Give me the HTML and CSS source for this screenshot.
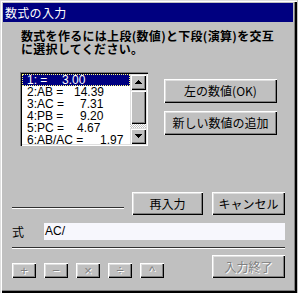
FILE: index.html
```html
<!DOCTYPE html>
<html lang="ja">
<head>
<meta charset="utf-8">
<title>数式の入力</title>
<link rel="stylesheet" href="styles.css">
</head>
<body>
<div class="window">
  <div class="titlebar">数式の入力</div>
  <div class="content">
    <p class="prompt">数式を作るには上段(数値)と下段(演算)を交互<br>に選択してください。</p>
    <div class="main">
      <div class="listbox">
        <ul class="items">
          <li class="item selected"><span class="label w35">1: =</span><span class="val">3.00</span></li>
          <li class="item"><span class="label w47">2:AB =</span><span class="val">14.39</span></li>
          <li class="item"><span class="label w53">3:AC =</span><span class="val">7.31</span></li>
          <li class="item"><span class="label w53">4:PB =</span><span class="val">9.20</span></li>
          <li class="item"><span class="label w50">5:PC =</span><span class="val">4.67</span></li>
          <li class="item"><span class="label w73">6:AB/AC =</span><span class="val">1.97</span></li>
        </ul>
        <div class="scrollbar">
          <div class="sb-btn"><svg width="7" height="4" viewBox="0 0 7 4"><path d="M3 0h1v1h1v1h1v1h1v1H0V3h1V2h1V1h1z" fill="#000"/></svg></div>
          <div class="sb-thumb"></div>
          <div class="sb-track"></div>
          <div class="sb-btn"><svg width="7" height="4" viewBox="0 0 7 4"><path d="M0 0h7v1H6v1H5v1H4v1H3V3H2V2H1V1H0z" fill="#000"/></svg></div>
        </div>
      </div>
      <div class="side-buttons">
        <button class="btn wide">左の数値(OK)</button>
        <button class="btn wide">新しい数値の追加</button>
      </div>
    </div>
    <div class="action-row">
      <div class="rule short"></div>
      <button class="btn mid first">再入力</button>
      <button class="btn mid second">キャンセル</button>
    </div>
    <div class="formula-row">
      <span class="formula-label">式</span>
      <div class="edit">AC/</div>
    </div>
    <div class="rule"></div>
    <div class="bottom-row">
      <div class="ops">
        <button class="btn op disabled">+</button>
        <button class="btn op disabled">−</button>
        <button class="btn op disabled">×</button>
        <button class="btn op disabled">÷</button>
        <button class="btn op disabled">^</button>
      </div>
      <button class="btn mid end disabled">入力終了</button>
    </div>
  </div>
</div>
</body>
</html>
```
FILE: styles.css
```css
* {
  box-sizing: border-box;
  margin: 0;
  padding: 0;
}
body {
  margin: 0;
  width: 298px;
  height: 293px;
  overflow: hidden;
  background: #c0c0c0;
  font-family: "Noto Sans CJK JP", "Liberation Sans", sans-serif;
  font-size: 12px;
  color: #000;
}
.window {
  width: 297px;
  height: 293px;
  background: #c0c0c0;
  padding: 3px 4px 4px 3px;
  box-shadow: inset 1px 1px #dfdfdf, inset 2px 2px #fff, inset -1px -1px #000, inset -2px -2px #000, inset -3px -3px #808080;
  display: flex;
  flex-direction: column;
}
.titlebar {
  height: 19px;
  background: #000080;
  color: #fff;
  padding-left: 2px;
  line-height: 19px;
  font-size: 12px;
  letter-spacing: 0.3px;
  white-space: nowrap;
}
.content {
  display: flex;
  flex-direction: column;
  padding: 0 8px 0 9px;
}
.prompt {
  margin: 7px 0 0 9px;
  font-weight: bold;
  line-height: 13px;
  letter-spacing: 0.3px;
  white-space: nowrap;
}
.main {
  display: flex;
  margin-top: 17px;
}
.listbox {
  margin-left: 8px;
  width: 128px;
  height: 74px;
  background: #fff;
  display: flex;
  padding: 2px;
  box-shadow: inset 1px 1px #808080, inset 2px 2px #000, inset -1px -1px #fff, inset -2px -2px #dfdfdf;
}
.items {
  list-style: none;
  flex: 1;
  font-family: "Liberation Sans", sans-serif;
  font-size: 12px;
}
.item {
  height: 12px;
  line-height: 12px;
  padding-left: 5px;
  white-space: nowrap;
}
.item.selected {
  background: #000080;
  color: #fff;
  outline: 1px dotted #ffff80;
  outline-offset: -1px;
}
.label { display: inline-block; }
.w35 { width: 35px; }
.w47 { width: 47px; }
.w50 { width: 50px; }
.w53 { width: 53px; }
.w73 { width: 73px; }
.scrollbar {
  width: 16px;
  display: flex;
  flex-direction: column;
}
.sb-btn, .sb-thumb {
  background: #c0c0c0;
  box-shadow: inset 1px 1px #dfdfdf, inset 2px 2px #fff, inset -1px -1px #000, inset -2px -2px #808080;
}
.sb-btn {
  height: 16px;
  display: flex;
  align-items: center;
  justify-content: center;
}
.sb-thumb { height: 34px; }
.sb-track {
  flex: 1;
  background-color: #c0c0c0;
  background-image: repeating-conic-gradient(#fff 0 25%, #c0c0c0 0 50%);
  background-size: 2px 2px;
}
.side-buttons {
  margin-left: 16px;
  padding-top: 7px;
  display: flex;
  flex-direction: column;
  gap: 8px;
}
.btn {
  font-family: "Noto Sans CJK JP", "Liberation Sans", sans-serif;
  font-size: 12px;
  color: #000;
  background: #c0c0c0;
  border: none;
  box-shadow: inset 1px 1px #fff, inset -1px -1px #000, inset -2px -2px #808080, inset 2px 2px #dfdfdf;
  line-height: 1;
  display: flex;
  align-items: center;
  justify-content: center;
  white-space: nowrap;
}
.wide { width: 113px; height: 24px; }
.mid { width: 72px; height: 23px; }
.action-row {
  display: flex;
  margin-top: 46px;
  height: 23px;
}
.rule {
  height: 2px;
  border-top: 1px solid #303030;
  border-bottom: 1px solid #fff;
  margin-top: 7px;
}
.rule.short {
  width: 112px;
  margin-top: 15px;
}
.first { margin-left: 8px; width: 71px; }
.second { margin-left: 9px; width: 73px; }
.formula-row {
  display: flex;
  align-items: center;
  margin-top: 8px;
  height: 17px;
}
.formula-label { width: 32px; }
.edit {
  width: 241px;
  height: 17px;
  background: #f7f7fd;
  font-family: "Liberation Sans", sans-serif;
  font-size: 12px;
  line-height: 17px;
  padding-left: 1px;
}
.bottom-row {
  display: flex;
  margin-top: 6px;
  height: 23px;
}
.ops {
  display: flex;
  gap: 8px;
  align-self: flex-end;
}
.op {
  width: 24px;
  height: 15px;
  font-family: "Liberation Sans", sans-serif;
  font-size: 13px;
}
.disabled {
  color: #808080;
  text-shadow: 1px 1px #fff;
}
.end { margin-left: auto; width: 73px; }
```
